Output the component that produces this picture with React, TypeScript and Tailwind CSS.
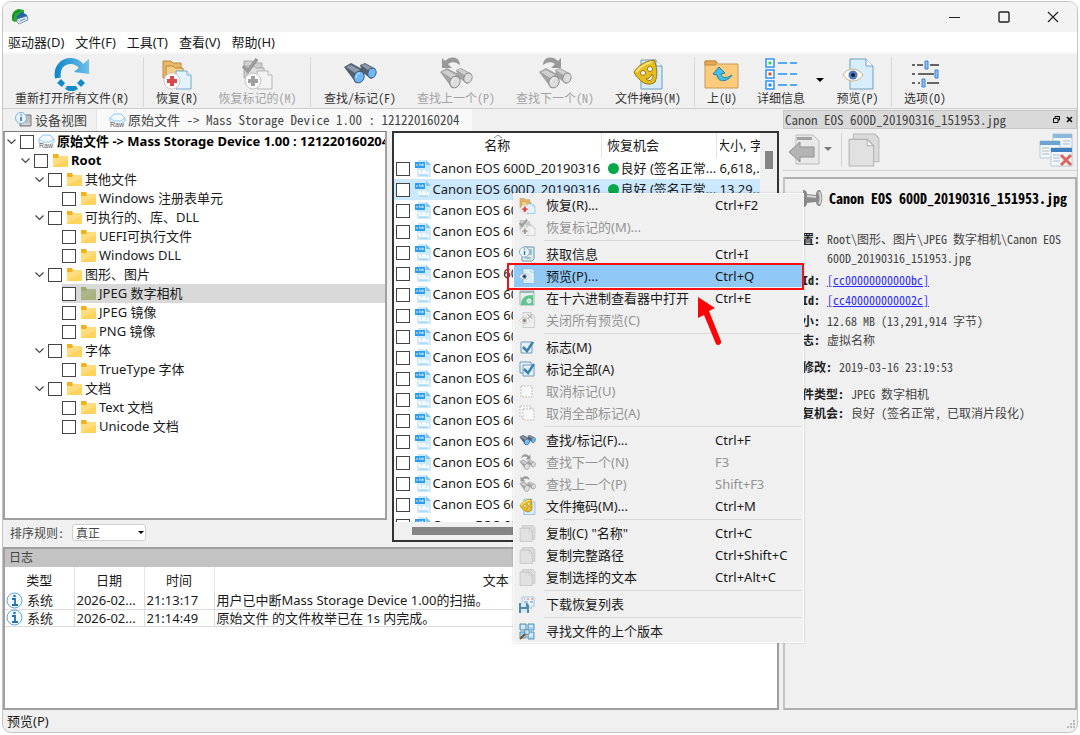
import type { ReactNode } from 'react'

const UI = 'font-["Noto_Sans","Noto_Sans_CJK_SC",sans-serif]'
const MONO = 'font-["Noto_Sans_Mono_CJK_SC","Liberation_Mono","Noto_Sans_CJK_SC",monospace]'

type IconProps = { size?: number; gray?: boolean }

function AppIcon() {
  return (
    <svg width="18" height="18" viewBox="0 0 18 18">
      <path d="M3 14C-1 9 1 2 8 1l5 1v4C9 5 6 8 7 13z" fill="#27a631" />
      <path d="M2 13C1 7 4 3 9 3" fill="none" stroke="#0c7a1a" />
      <path d="M6 8l5-4 5 3 1 5-8 3-3-2z" fill="#2463ae" />
      <path d="M6 11l10-3 1 4-9 4-2-2z" fill="#d8e4ef" stroke="#56758f" strokeWidth=".6" />
      <path d="M9 13l5-2" stroke="#5a9bd4" />
    </svg>
  )
}

function ReopenIcon() {
  return (
    <svg width="36" height="34" viewBox="0 0 36 34">
      <defs>
        <linearGradient id="reopen" gradientUnits="userSpaceOnUse" x1="0" y1="0" x2="34" y2="0">
          <stop offset="0" stopColor="#0b86c4" />
          <stop offset="1" stopColor="#6cbcec" />
        </linearGradient>
      </defs>
      <path d="M4 21C2 11 8 4 17 4c5 0 8 2 11 6" fill="none" stroke="url(#reopen)" strokeWidth="6" />
      <path d="M35 2v15l-15-2z" fill="url(#reopen)" />
      <path d="M7 22l4 4-3 4-5-4zM13 29h9l2 3-4 2h-5l-4-2zM27 22l4 4-4 4-4-4z" fill="#118cc9" />
    </svg>
  )
}

function RecoverIcon({ size = 32, gray, check }: IconProps & { check?: boolean }) {
  const folder = gray ? '#cfcfcf' : '#e9b765'
  const edge = gray ? '#a8a8a8' : '#b98a45'
  return (
    <svg width={size} height={size} viewBox="0 0 32 32">
      <path d="M2 3h8l2 2h8v15H2z" fill={folder} stroke={edge} />
      <path d="M5 8h7l2 2h8v13H5z" fill={gray ? '#dedede' : '#f3cd83'} stroke={edge} />
      <path d="M15 13h11l4 4v14H15z" fill={gray ? '#f3f3f3' : '#e2f3fc'} stroke={gray ? '#b5b5b5' : '#76aacb'} />
      <path d="M26 13v4h4" fill="#fff" stroke={gray ? '#b5b5b5' : '#76aacb'} />
      <circle cx="11" cy="23" r="8" fill="#fafafa" stroke={gray ? '#c4c4c4' : '#d4c9c9'} />
      <path d="M9 18h4v3h3v4h-3v3H9v-3H6v-4h3z" fill={gray ? '#a0a0a0' : '#d9484c'} />
      {check && <path d="M1 8l5 5L15 1" fill="none" stroke="#9a9a9a" strokeWidth="3.5" />}
    </svg>
  )
}

function Binoculars({ size = 34, gray, turn }: IconProps & { turn?: 'prev' | 'next' }) {
  const body = gray ? '#a3a3a3' : '#53606f'
  const light = gray ? '#cfcfcf' : '#8d9aaa'
  const lens = gray ? '#dcdcdc' : '#6db8f5'
  const edge = gray ? '#8c8c8c' : '#3c5878'
  return (
    <svg width={size} height={size} viewBox="0 0 34 34">
      {turn === 'prev' && <path d="M3 1v10h10l-4-4c4-3 8-2 12 1 0-8-9-10-15-4z" fill="#999" />}
      {turn === 'next' && <path d="M23 1v10H13l4-4c-4-3-8-2-12 1 0-8 9-10 15-4z" fill="#999" />}
      <g transform={turn ? 'translate(0 5)' : undefined}>
        <path d="M17 8l5-2 9 5 1 7-4 4-9-7z" fill={body} />
        <path d="M18 8l4-1 7 4-4 2z" fill={light} />
        <path d="M1 10l7-4 13 7-1 9-7 4z" fill={body} />
        <path d="M3 10l5-2 9 5-5 3z" fill={light} />
        <ellipse cx="29" cy="16" rx="4" ry="5" transform="rotate(20 29 16)" fill={lens} stroke={edge} />
        <ellipse cx="16" cy="20" rx="5" ry="6" transform="rotate(25 16 20)" fill={lens} stroke={edge} />
        <path d="M13 21c0-3 2-5 4-5" fill="none" stroke="#fff" opacity=".7" />
      </g>
    </svg>
  )
}

function MaskIcon({ size = 32 }: IconProps) {
  return (
    <svg width={size} height={size} viewBox="0 0 32 32">
      <path d="M9 2h15l6 6v23H9z" fill="#d6ecf9" stroke="#6d9dbd" />
      <path d="M24 2v6h6" fill="#fff" stroke="#6d9dbd" />
      <path d="M2 14C7 7 13 3 22 2c3 7 4 15 1 22-5 4-12 2-16-3-2-2-4-4-5-7z" fill="#e6bd20" stroke="#987610" />
      <path d="M4 14C9 8 14 5 20 4" fill="none" stroke="#f8e37c" strokeWidth="2" />
      <circle cx="11" cy="15" r="2.5" fill="#fff" stroke="#987610" />
      <circle cx="18" cy="11" r="2.5" fill="#fff" stroke="#987610" />
      <path d="M14 21c3 0 5-2 6-5 3 4-2 9-6 5z" fill="#fff" stroke="#987610" />
    </svg>
  )
}

function UpIcon() {
  return (
    <svg width="36" height="32" viewBox="0 0 36 32">
      <path d="M1 30V3h11l2 3h20v24z" fill="#fccb7c" stroke="#c99a50" />
      <path d="M1 3h11v4H1z" fill="#e8a850" stroke="#c08a3c" />
      <path d="M9 16l6-7 6 6-4 1c1 4 5 5 11 1-3 6-14 9-15 0z" fill="#45bfe8" stroke="#237da5" />
    </svg>
  )
}

function DetailsIcon() {
  const rows = [
    { y: 2, fill: '#3bd44b' },
    { y: 13, fill: '#e0501c' },
    { y: 24, fill: '#1787f0' },
  ]
  return (
    <svg width="34" height="34" viewBox="0 0 34 34">
      {rows.map((r) => (
        <g key={r.y}>
          <rect x="2" y={r.y} width="8" height="8" fill="#fff" stroke="#2f92f4" strokeWidth="1.5" />
          <rect x="4.5" y={r.y + 2.5} width="3" height="3" fill={r.fill} />
          <path d={`M14 ${r.y + 4}h9M26 ${r.y + 4}h7`} stroke="#1f93f5" strokeWidth="1.5" />
        </g>
      ))}
    </svg>
  )
}

function PreviewIcon({ size = 32, gray }: IconProps) {
  return (
    <svg width={size} height={size} viewBox="0 0 32 32">
      <path d="M8 1h16l7 7v23H8z" fill={gray ? '#ededed' : '#d8eefa'} stroke={gray ? '#aaa' : '#6e9fbe'} />
      <path d="M24 1v7h7" fill="#fff" stroke={gray ? '#aaa' : '#6e9fbe'} />
      <path d="M1 17c5-8 15-8 20 0-5 8-15 8-20 0z" fill="#fffaf0" stroke={gray ? '#aaa' : '#c9b184'} />
      <circle cx="11" cy="17" r="4.5" fill={gray ? '#aaa' : '#4f7bc2'} />
      <circle cx="11" cy="17" r="2" fill={gray ? '#777' : '#14233f'} />
      {gray && <path d="M17 4l10 10M27 4L17 14" stroke="#999" strokeWidth="2" />}
    </svg>
  )
}

function OptionsIcon() {
  return (
    <svg width="30" height="32" viewBox="0 0 30 32">
      <path d="M2 7h3M7 7h6M20 7h9M2 16h3M8 16h16M2 25h3M8 25h2M17 25h12" stroke="#666" strokeWidth="2" />
      <path d="M15 3h3v8h-3zM25 12h3v8h-3zM12 21h3v8h-3z" fill="#8dc3f7" stroke="#3f83c4" />
    </svg>
  )
}

function DeviceIcon() {
  return (
    <svg width="18" height="16" viewBox="0 0 18 16">
      <path d="M7 3h9v11H5v-3" fill="#bdbdbd" stroke="#777" />
      <path d="M7 12h8" stroke="#eee" />
      <circle cx="6" cy="6" r="5.5" fill="#e8f4fc" stroke="#7fb2d4" />
      <path d="M6 5v4M6 2.5v1" stroke="#2874ad" strokeWidth="1.6" />
    </svg>
  )
}

function RawIcon() {
  return (
    <svg width="17" height="15" viewBox="0 0 17 15">
      <path d="M1 5l4-4h7l4 4-4 3H5zM1 5v3l3 2M16 5v3l-3 2" fill="#f2faff" stroke="#8cc8f0" />
      <text x="1" y="14" fontSize="7" fontFamily="Liberation Sans" fill="#555">Raw</text>
    </svg>
  )
}

function FolderIcon({ selected }: { selected?: boolean }) {
  return (
    <svg width="15" height="14" viewBox="0 0 15 14">
      <path d="M0 0h5l1 2h9v10H0z" fill={selected ? '#9fac70' : '#f3b01c'} />
      <path d="M0 4h5l1-2h9v11H0z" fill={selected ? '#aab27c' : '#ffd35e'} />
      <path d="M0 4h5l1-2h9v3L0 12z" fill={selected ? '#a9b896' : '#ffe08a'} opacity=".7" />
    </svg>
  )
}

function JpegIcon() {
  return (
    <svg width="16" height="17" viewBox="0 0 16 17">
      <path d="M3 0h8l5 5v12H2V7z" fill="#cdeafb" />
      <path d="M11 0v5h5z" fill="#7fc3f1" />
      <path d="M0 2h10v6H0z" fill="#2e9eec" />
      <path d="M2 4v2M4 4h1v2M7 6V4h1v2" stroke="#d5edfc" fill="none" />
      <path d="M3 11h2v3h3v-3h2v3h3v-3" fill="none" stroke="#fff" strokeWidth="1.5" />
      <path d="M4 15h9" stroke="#8ccaf3" />
    </svg>
  )
}

function InfoBadge() {
  return (
    <svg width="17" height="17" viewBox="0 0 17 17">
      <circle cx="8.5" cy="8.5" r="7.5" fill="#f4faff" stroke="#5a9fd6" />
      <path d="M6 7h3v6M6 13h6" fill="none" stroke="#1f6fb3" strokeWidth="1.8" />
      <circle cx="8.5" cy="4" r="1.3" fill="#1f6fb3" />
    </svg>
  )
}

function InfoDocIcon() {
  return (
    <svg width="16" height="16" viewBox="0 0 16 16">
      <path d="M5 1h10v12l-2 2H3v-4" fill="#dcebea" stroke="#6b9aa3" />
      <path d="M10 4h3M10 6h3M10 8h3M6 12h6" stroke="#6b9aa3" />
      <circle cx="5.5" cy="6" r="5" fill="#eef7fc" stroke="#86aec4" />
      <path d="M5.5 5v4M5.5 2.5v1" stroke="#2874ad" strokeWidth="1.4" />
    </svg>
  )
}

function HexIcon() {
  return (
    <svg width="16" height="16" viewBox="0 0 16 16">
      <path d="M1 1h14v14H1z" fill="#e8efec" stroke="#a5b5b0" />
      <path d="M1 1h14v2H1z" fill="#9db4b8" />
      <path d="M2 15C2 8 6 5 14 5v10z" fill="#5fc48d" />
      <circle cx="10" cy="11" r="2" fill="#bfe9d0" stroke="#fff" />
    </svg>
  )
}

function MarkIcon({ double, off }: { double?: boolean; off?: boolean }) {
  const dash = off ? '2 1' : undefined
  const stroke = off ? '#c0c0c0' : '#6f9cb8'
  const fill = off ? '#f8f8f8' : '#e4f1f8'
  return (
    <svg width="16" height="16" viewBox="0 0 16 16">
      {double && <path d="M1 1h11v11H1z" fill={fill} stroke={stroke} strokeDasharray={dash} />}
      <path d={double ? 'M4 4h11v11H4z' : 'M2 3h11v11H2z'} fill={fill} stroke={stroke} strokeDasharray={dash} />
      {!off && <path d={double ? 'M5 8l4 4 6-9' : 'M4 8l4 4 6-9'} fill="none" stroke="#3c82ad" strokeWidth="2.5" />}
    </svg>
  )
}

function CopyIcon({ size = 16 }: IconProps) {
  return (
    <svg width={size} height={size} viewBox="0 0 32 32">
      <path d="M6 1h20l4 4v22H6z" fill="#dadada" stroke="#b9b9b9" />
      <path d="M2 6h17l6 6v19H2z" fill="#e1e1e1" stroke="#b3b3b3" />
      <path d="M19 6v6h6z" fill="#f6f6f6" stroke="#b3b3b3" />
    </svg>
  )
}

function DownloadIcon() {
  return (
    <svg width="16" height="17" viewBox="0 0 16 17">
      <path d="M3 1h12v9h-2l-1 3-2-3H3z" fill="#eaf4fa" stroke="#a8c8dc" />
      <path d="M5 3h1M8 3h2M12 3h2" stroke="#e06060" />
      <path d="M5 6h4M11 6h3" stroke="#5a8fd0" />
      <path d="M0 7h8l2 2v8H0z" fill="#4f8aa8" />
      <path d="M2 7h5v4H2zM2 13h6v4H2z" fill="#d8e8f0" />
    </svg>
  )
}

function VersionsIcon() {
  return (
    <svg width="16" height="17" viewBox="0 0 16 17">
      <path d="M1 1h6v6H1zM9 1h6v6H9zM1 9h6v6H1zM9 9h6v7H9z" fill="#a9d3ee" stroke="#5b94b8" />
      <path d="M2 3h4M10 3h4M2 5h4M10 11h4M10 13h4" stroke="#fff" />
      <circle cx="8" cy="9" r="2.5" fill="#c5e4f6" stroke="#5b94b8" />
      <path d="M6 11l-5 5" stroke="#7a5225" strokeWidth="2" />
    </svg>
  )
}

function ExportIcon() {
  return (
    <svg width="32" height="33" viewBox="0 0 32 33">
      <path d="M8 2h17l6 6v23H8z" fill="#e8e8e8" stroke="#bcbcbc" />
      <path d="M9 4h15v3H9z" fill="#a2a2a2" />
      <path d="M1 19l11-10v5h14v10H12v5z" fill="#b4b4b4" stroke="#8f8f8f" />
    </svg>
  )
}

function CloseWindowsIcon() {
  return (
    <svg width="34" height="34" viewBox="0 0 34 34">
      <path d="M14 1h19v14H14z" fill="#eef4f8" stroke="#b8c8d4" />
      <path d="M14 1h19v4H14z" fill="#8cb8dd" />
      <path d="M1 8h20v17H1z" fill="#f4f7f9" stroke="#b8c8d4" />
      <path d="M1 8h20v4H1z" fill="#6ba3d6" />
      <path d="M3 15h7M3 18h7M3 21h7M24 8h7M24 11h7" stroke="#a9bccb" />
      <path d="M12 15h21v18H12z" fill="#f4f7f9" stroke="#b8c8d4" />
      <path d="M12 15h21v4H12z" fill="#3f80c0" />
      <path d="M14 22h7M14 25h7M14 28h7" stroke="#a9bccb" />
      <path d="M22 22l10 10M32 22L22 32" stroke="#d8675f" strokeWidth="3" />
    </svg>
  )
}

function PinIcon() {
  return (
    <svg width="22" height="20" viewBox="0 0 22 20">
      <path d="M2 2c3 0 4 2 4 4l9 1c0-3 1-5 4-5 3 4 3 12 0 16-3 0-4-2-4-4l-9 1c0 2-1 4-4 4z" fill="#8b8b8b" />
      <path d="M6 8l9 1M18 4c2 3 2 9 0 12" stroke="#d5d5d5" strokeWidth="2" fill="none" />
    </svg>
  )
}

function DownArrow() {
  return (
    <svg width="8" height="5" viewBox="0 0 8 5">
      <path d="M0 0h8L4 4z" fill="currentColor" />
    </svg>
  )
}

const menus = ['驱动器(D)', '文件(F)', '工具(T)', '查看(V)', '帮助(H)']

function TitleBar() {
  return (
    <header className="flex h-[30px] shrink-0 items-center justify-between bg-[#f3f3f3] pl-2">
      <AppIcon />
      <div className="flex text-[#222]">
        <button aria-label="最小化" className="flex h-[30px] w-[49px] items-center justify-center">
          <svg width="12" height="12" viewBox="0 0 12 12"><path d="M0 6.5h11" stroke="currentColor" /></svg>
        </button>
        <button aria-label="最大化" className="flex h-[30px] w-[49px] items-center justify-center">
          <svg width="12" height="12" viewBox="0 0 12 12"><rect x="1" y="1" width="10" height="10" rx="1" fill="none" stroke="currentColor" strokeWidth="1.4" /></svg>
        </button>
        <button aria-label="关闭" className="flex h-[30px] w-[49px] items-center justify-center">
          <svg width="12" height="12" viewBox="0 0 12 12"><path d="M1 1l10 10M11 1L1 11" stroke="currentColor" strokeWidth="1.2" /></svg>
        </button>
      </div>
    </header>
  )
}

function Tool({ label, width, disabled, children }: { label: string; width: string; disabled?: boolean; children: ReactNode }) {
  return (
    <button
      disabled={disabled}
      className={`flex shrink-0 flex-col items-center whitespace-nowrap text-[12px] leading-[14px] ${width} ${disabled ? 'text-[#a3a3a3]' : 'text-[#333]'}`}
    >
      <span className="flex h-[34px] items-center">{children}</span>
      {label}
    </button>
  )
}

function ToolSep() {
  return <div className="mx-[2px] h-[50px] w-[2px] shrink-0 border-l border-[#d8d8d8]" />
}

function Toolbar() {
  return (
    <div className={`flex h-[55px] shrink-0 border-b border-[#cdcdcd] pt-[3px] ${MONO}`}>
      <Tool label="重新打开所有文件(R)" width="w-[138px]"><ReopenIcon /></Tool>
      <ToolSep />
      <Tool label="恢复(R)" width="w-[60px]"><RecoverIcon /></Tool>
      <Tool label="恢复标记的(M)" width="w-[101px]" disabled><RecoverIcon gray check /></Tool>
      <ToolSep />
      <Tool label="查找/标记(F)" width="w-[92px]"><Binoculars /></Tool>
      <Tool label="查找上一个(P)" width="w-[100px]" disabled><Binoculars gray turn="prev" /></Tool>
      <Tool label="查找下一个(N)" width="w-[98px]" disabled><Binoculars gray turn="next" /></Tool>
      <Tool label="文件掩码(M)" width="w-[88px]"><MaskIcon /></Tool>
      <ToolSep />
      <Tool label="上(U)" width="w-[48px]"><UpIcon /></Tool>
      <Tool label="详细信息" width="w-[70px]"><DetailsIcon /></Tool>
      <button aria-label="查看方式" className="flex w-[10px] shrink-0 items-center pb-1 text-black"><DownArrow /></button>
      <Tool label="预览(P)" width="w-[63px]"><PreviewIcon /></Tool>
      <ToolSep />
      <Tool label="选项(O)" width="w-[60px]"><OptionsIcon /></Tool>
    </div>
  )
}

const tree = [
  { label: '原始文件 -> Mass Storage Device 1.00 : 121220160204', depth: 0, open: true, bold: true, raw: true },
  { label: 'Root', depth: 1, open: true, bold: true },
  { label: '其他文件', depth: 2, open: true },
  { label: 'Windows 注册表单元', depth: 3 },
  { label: '可执行的、库、DLL', depth: 2, open: true },
  { label: 'UEFI可执行文件', depth: 3 },
  { label: 'Windows DLL', depth: 3 },
  { label: '图形、图片', depth: 2, open: true },
  { label: 'JPEG 数字相机', depth: 3, selected: true },
  { label: 'JPEG 镜像', depth: 3 },
  { label: 'PNG 镜像', depth: 3 },
  { label: '字体', depth: 2, open: true },
  { label: 'TrueType 字体', depth: 3 },
  { label: '文档', depth: 2, open: true },
  { label: 'Text 文档', depth: 3 },
  { label: 'Unicode 文档', depth: 3 },
]

const indents = ['pl-[2px]', 'pl-[16px]', 'pl-[30px]', 'pl-[44px]']

const checkbox = 'h-[14px] w-[14px] shrink-0 appearance-none border border-[#444] bg-white checked:bg-[#3c82ad]'

function TreePanel() {
  return (
    <div className="min-h-0 flex-1 overflow-hidden border-2 border-t border-[#a0a0a0] border-t-[#7a7a7a] bg-white text-[13px] leading-[19px] text-[#1a1a1a]">
      {tree.map((n) => (
        <div key={n.label} className={`flex h-[19px] items-center whitespace-nowrap ${indents[n.depth]}`}>
          <span className="w-[13px] shrink-0">
            {n.open && (
              <svg width="9" height="6" viewBox="0 0 9 6"><path d="M.5 .5l4 4 4-4" fill="none" stroke="#444" strokeWidth="1.2" /></svg>
            )}
          </span>
          <label className={`flex h-full flex-1 items-center ${n.selected ? 'bg-[#d9d9d9]' : ''}`}>
            <input type="checkbox" className={checkbox} />
            <span className={`shrink-0 ${n.raw ? 'ml-[4px] mr-[2px]' : 'ml-[5px] mr-[3px]'}`}>{n.raw ? <RawIcon /> : <FolderIcon selected={n.selected} />}</span>
            <span className={n.bold ? 'font-bold text-black' : ''}>{n.label}</span>
          </label>
        </div>
      ))}
    </div>
  )
}

const chance = '良好 (签名正常...'
const files = Array.from({ length: 18 }, (_, i) => ({ id: i, name: 'Canon EOS 600D_20190316', size: i === 0 ? '6,618,...' : '13,29...' }))

function FileList() {
  return (
    <div className="flex min-w-0 flex-1 flex-col overflow-hidden border-2 border-[#333] bg-[#f0f0f0]">
      <div className="flex min-h-0 flex-1">
        <div className="min-w-0 flex-1 overflow-hidden bg-white">
          <table className="w-full table-fixed text-[13px] leading-[21px] text-[#1a1a1a]">
            <thead>
              <tr className="h-[25px]">
                <th className="relative w-[208px] border-r border-[#e5e5e5] font-normal">
                  <svg width="8" height="4" viewBox="0 0 8 4" className="absolute left-[100px] top-[1px]"><path d="M0 4l4-3 4 3" fill="none" stroke="#888" /></svg>
                  名称
                </th>
                <th className="w-[115px] border-r border-[#e5e5e5] pl-[5px] text-left font-normal">恢复机会</th>
                <th className="font-normal">
                  <div className="ml-[3px] flex justify-center overflow-hidden whitespace-nowrap">大小, 字</div>
                </th>
              </tr>
            </thead>
            <tbody>
              {files.map((f) => (
                <tr key={f.id} className={`h-[21px] ${f.id === 1 ? 'bg-[#cce8ff]' : ''}`}>
                  <td className="overflow-hidden whitespace-nowrap">
                    <label className="flex h-[21px] items-center pl-[2px]">
                      <input type="checkbox" className={checkbox} />
                      <span className="ml-[5px] mr-[2px] shrink-0"><JpegIcon /></span>
                      {f.name}
                    </label>
                  </td>
                  <td className="overflow-hidden whitespace-nowrap">
                    <div className="flex items-center pl-[6px]">
                      <span className="mr-[2px] h-[11px] w-[11px] shrink-0 rounded-full bg-[#07a848]" />
                      {chance}
                    </div>
                  </td>
                  <td className="overflow-hidden whitespace-nowrap pl-[3px]">{f.size}</td>
                </tr>
              ))}
            </tbody>
          </table>
        </div>
        <div className="w-[17px] shrink-0 pl-[5px] pt-[18px]">
          <div className="h-[18px] w-[8px] bg-[#858585]" />
        </div>
      </div>
      <div className="h-[18px] shrink-0 pl-[18px] pr-[120px] pt-[5px]">
        <div className="h-[8px] bg-[#858585]" />
      </div>
    </div>
  )
}

const logs = [
  { date: '2026-02...', time: '21:13:17', text: '用户已中断Mass Storage Device 1.00的扫描。' },
  { date: '2026-02...', time: '21:14:49', text: '原始文件 的文件枚举已在 1s 内完成。' },
]

function LogPanel() {
  return (
    <section className="mt-[5px] flex h-[163px] shrink-0 flex-col border-2 border-[#a0a0a0] bg-white">
      <h2 className={`h-[18px] shrink-0 bg-[#c3c3c3] pl-[4px] text-[12px] leading-[16px] text-[#444] ${MONO}`}>日志</h2>
      <table className="w-full table-fixed text-[13px] leading-[16px] text-[#1a1a1a]">
        <thead>
          <tr className="h-[25px]">
            <th className="w-[69px] border-r border-[#e5e5e5] font-normal">类型</th>
            <th className="w-[70px] border-r border-[#e5e5e5] font-normal">日期</th>
            <th className="w-[70px] border-r border-[#e5e5e5] font-normal">时间</th>
            <th className="font-normal">文本</th>
          </tr>
        </thead>
        <tbody>
          {logs.map((l) => (
            <tr key={l.time} className="h-[17px] whitespace-nowrap border-b border-[#dcdcdc]">
              <td className="border-r border-[#dcdcdc]"><div className="flex h-[16px] items-center gap-[4px] pl-px"><InfoBadge />系统</div></td>
              <td className="overflow-hidden border-r border-[#dcdcdc] pl-[2px]">{l.date}</td>
              <td className="border-r border-[#dcdcdc] pl-[2px]">{l.time}</td>
              <td className="pl-[2px]">{l.text}</td>
            </tr>
          ))}
        </tbody>
      </table>
    </section>
  )
}

function Field({ name, children }: { name: string; children: ReactNode }) {
  return (
    <div className="flex gap-[7px]">
      <dt className="shrink-0 font-bold text-[#222]">{name}</dt>
      <dd className="min-w-0 flex-1">{children}</dd>
    </div>
  )
}

function PreviewDock() {
  return (
    <aside className={`flex w-[294px] shrink-0 flex-col text-[12px] text-[#444] ${MONO}`}>
      <div className="mt-px flex h-[19px] shrink-0 items-center justify-between border border-[#c6c6c6] bg-[#d9d9d9] pl-px pr-[3px] text-[13px]">
        <span>Canon EOS 600D_20190316_151953.jpg</span>
        <div className="flex gap-[6px] text-black">
          <button aria-label="浮动">
            <svg width="7" height="7" viewBox="0 0 7 7"><path d="M2 2V.5h4.500V4H5M.5 2.500H5v4H.5z" fill="none" stroke="currentColor" /></svg>
          </button>
          <button aria-label="关闭面板">
            <svg width="7" height="7" viewBox="0 0 7 7"><path d="M1 1l5 5M6 1L1 6" stroke="currentColor" strokeWidth="1.5" /></svg>
          </button>
        </div>
      </div>
      <div className="flex h-[42px] shrink-0 items-center border-b border-[#d4d4d4] pl-[5px] pr-[4px] text-[#777]">
        <button aria-label="导出"><ExportIcon /></button>
        <button aria-label="导出选项" className="ml-[4px]"><DownArrow /></button>
        <div className="ml-[9px] mr-[5px] h-[34px] border-l border-[#d4d4d4]" />
        <button aria-label="复制"><CopyIcon size={34} /></button>
        <button aria-label="关闭所有预览" className="ml-auto"><CloseWindowsIcon /></button>
      </div>
      <div className="mt-[6px] min-h-0 flex-1 overflow-hidden border-2 border-[#b0b0b0] border-l-[#c4c4c4] pl-[5px] leading-[19px]">
        <div className="flex h-[38px] items-center gap-[6px] pl-[11px] text-black">
          <PinIcon />
          <h2 className="whitespace-nowrap text-[14px] font-bold">Canon EOS 600D_20190316_151953.jpg</h2>
        </div>
        <dl className="mt-[12px]">
          <Field name="位置:">Root\图形、图片\JPEG 数字相机\Canon EOS 600D_20190316_151953.jpg</Field>
          <div className="mt-[3px]"><Field name="本Id:"><a href="#cc00000000000bc" className="text-[#2b2bff] underline">[cc00000000000bc]</a></Field></div>
          <div className="mb-[2px] mt-px"><Field name="父Id:"><a href="#cc400000000002c" className="text-[#2b2bff] underline">[cc400000000002c]</a></Field></div>
          <Field name="大小:">12.68 MB (13,291,914 字节)</Field>
          <Field name="标志:">虚拟名称</Field>
          <div className="my-[8px]"><Field name="已修改:">2019-03-16 23:19:53</Field></div>
          <Field name="文件类型:">JPEG 数字相机</Field>
          <Field name="恢复机会:">良好 (签名正常, 已取消片段化)</Field>
        </dl>
      </div>
    </aside>
  )
}

type Item = { label: string; keys?: string; disabled?: boolean; active?: boolean; icon: ReactNode }

const contextGroups: Item[][] = [
  [
    { label: '恢复(R)...', keys: 'Ctrl+F2', icon: <RecoverIcon size={17} /> },
    { label: '恢复标记的(M)...', disabled: true, icon: <RecoverIcon size={17} gray check /> },
  ],
  [
    { label: '获取信息', keys: 'Ctrl+I', icon: <InfoDocIcon /> },
    { label: '预览(P)...', keys: 'Ctrl+Q', active: true, icon: <PreviewIcon size={16} /> },
    { label: '在十六进制查看器中打开', keys: 'Ctrl+E', icon: <HexIcon /> },
    { label: '关闭所有预览(C)', disabled: true, icon: <PreviewIcon size={16} gray /> },
  ],
  [
    { label: '标志(M)', icon: <MarkIcon /> },
    { label: '标记全部(A)', icon: <MarkIcon double /> },
    { label: '取消标记(U)', disabled: true, icon: <MarkIcon off /> },
    { label: '取消全部标记(A)', disabled: true, icon: <MarkIcon off double /> },
  ],
  [
    { label: '查找/标记(F)...', keys: 'Ctrl+F', icon: <Binoculars size={17} /> },
    { label: '查找下一个(N)', keys: 'F3', disabled: true, icon: <Binoculars size={17} gray turn="next" /> },
    { label: '查找上一个(P)', keys: 'Shift+F3', disabled: true, icon: <Binoculars size={17} gray turn="prev" /> },
    { label: '文件掩码(M)...', keys: 'Ctrl+M', icon: <MaskIcon size={17} /> },
  ],
  [
    { label: '复制(C) "名称"', keys: 'Ctrl+C', icon: <CopyIcon size={17} /> },
    { label: '复制完整路径', keys: 'Ctrl+Shift+C', icon: <CopyIcon size={17} /> },
    { label: '复制选择的文本', keys: 'Ctrl+Alt+C', icon: <CopyIcon size={17} /> },
  ],
  [{ label: '下载恢复列表', icon: <DownloadIcon /> }],
  [{ label: '寻找文件的上个版本', icon: <VersionsIcon /> }],
]

function ContextMenu() {
  return (
    <div role="menu" className="absolute left-[513px] top-[193px] w-[291px] border border-[#fafafa] bg-[#f0f0f0] text-[13px] leading-[22px] shadow-[0_0_2px_rgba(0,0,0,0.2)]">
      {contextGroups.map((group, i) => (
        <div key={i}>
          {i > 0 && <div className="ml-[30px] mr-[2px] h-[5px] pt-[2px]"><div className="border-t border-[#d9d9d9]" /></div>}
          {group.map((item) => (
            <button
              key={item.label}
              role="menuitem"
              disabled={item.disabled}
              className={`relative flex h-[22px] w-full items-center pl-[5px] text-left ${item.active ? 'bg-[#90c8f6]' : ''} ${item.disabled ? 'text-[#949494]' : 'text-[#1a1a1a]'}`}
            >
              <span className="w-[27px] shrink-0">{item.icon}</span>
              <span className="w-[169px] shrink-0 whitespace-nowrap">{item.label}</span>
              <span>{item.keys}</span>
              {item.active && <span className="pointer-events-none absolute -bottom-[3px] -left-[7px] -right-[1px] -top-[2px] border-2 border-[#f81010]" />}
            </button>
          ))}
        </div>
      ))}
      <svg width="28" height="50" viewBox="0 0 28 50" className="absolute left-[182px] top-[103px]">
        <path d="M2 0v21l6-3 12 29a3 3 0 0 0 5-3L13 14l6-3z" fill="#fb0606" />
      </svg>
    </div>
  )
}

export default function App() {
  return (
    <div className={`relative h-screen bg-white px-[2px] pb-[2px] pt-px ${UI}`}>
      <div className="flex h-full flex-col overflow-hidden rounded-[9px] border border-[#c4c4c4] bg-[#f0f0f0]">
        <TitleBar />
        <nav className="flex h-[22px] shrink-0 items-center gap-[11px] border-b-2 border-[#f8f8f8] bg-white pl-[5px] text-[13px] leading-[18px] text-[#1a1a1a]">
          {menus.map((m) => <button key={m}>{m}</button>)}
        </nav>
        <Toolbar />
        <main className="flex min-h-0 flex-1 gap-[4px]">
          <div className="flex min-w-0 flex-1 flex-col">
            <div className={`flex h-[22px] shrink-0 text-[13px] leading-[22px] text-[#444] ${MONO}`}>
              <button className="flex w-[94px] shrink-0 items-center gap-[2px] border-r border-[#e4e4e4] pl-[12px]"><DeviceIcon />设备视图</button>
              <button className="flex items-center gap-[2px] whitespace-nowrap bg-[#f9f9f9] px-[12px]"><RawIcon />原始文件 -&gt; Mass Storage Device 1.00 : 121220160204</button>
            </div>
            <div className="flex min-h-0 flex-1 gap-[5px]">
              <div className="flex min-w-0 flex-1 flex-col">
                <TreePanel />
                <div className={`flex h-[22px] shrink-0 items-center gap-[8px] pl-[7px] pt-[3px] text-[12px] text-[#444] ${MONO}`}>
                  <label htmlFor="sort">排序规则:</label>
                  <div className="relative">
                    <select id="sort" className="h-[17px] w-[74px] appearance-none rounded-[3px] border border-[#d0d0d0] bg-white pl-[3px] leading-[15px]">
                      <option>真正</option>
                    </select>
                    <span className="pointer-events-none absolute right-[2px] top-[7px] text-black">
                      <svg width="6" height="4" viewBox="0 0 6 4"><path d="M0 0h6L3 3z" /></svg>
                    </span>
                  </div>
                </div>
              </div>
              <FileList />
            </div>
            <LogPanel />
          </div>
          <PreviewDock />
        </main>
        <footer className="flex h-[22px] shrink-0 items-center justify-between pl-[4px] text-[13px] leading-[20px] text-[#1a1a1a]">
          预览(P)
          <svg width="12" height="12" viewBox="0 0 12 12" className="self-end"><path d="M8 1h2M5 4h2M8 4h2M2 7h2M5 7h2M8 7h2" stroke="#bbb" strokeWidth="2" /></svg>
        </footer>
      </div>
      <ContextMenu />
    </div>
  )
}
